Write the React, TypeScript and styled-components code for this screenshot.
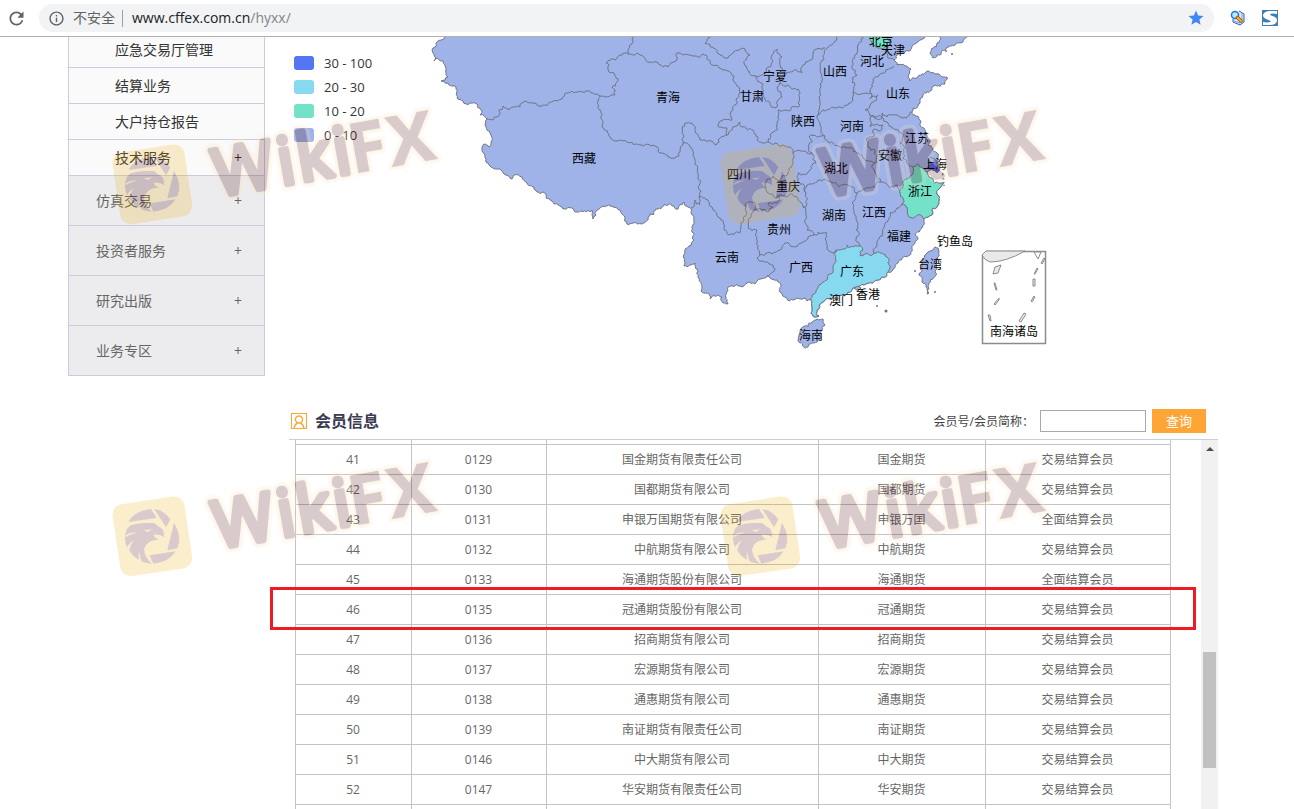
import React from "react";
import styled, { createGlobalStyle } from "styled-components";
import { MdRefresh, MdInfoOutline, MdStar } from "react-icons/md";

const GlobalStyle = createGlobalStyle`
  * { box-sizing: border-box; }
  body {
    margin: 0;
    background: #fff;
    font-family: "Open Sans", "Noto Sans CJK SC", sans-serif;
    font-size: 12px;
    color: #666;
  }
`;

const Page = styled.div`
  position: relative;
  display: flex;
  flex-direction: column;
  height: 100vh;
  overflow: hidden;
`;

/* Browser bar */

const BrowserBar = styled.header`
  position: relative;
  z-index: 1;
  display: flex;
  align-items: center;
  flex: none;
  gap: 16px;
  height: 37px;
  padding: 0 16px 0 6px;
  background: #fff;
  border-bottom: 1px solid #b0b0b0;
`;

const ReloadButton = styled.button`
  display: flex;
  margin-right: -4px;
  padding: 0;
  border: 0;
  background: none;
  color: #5f6368;
`;

const AddressBar = styled.div`
  display: flex;
  align-items: center;
  flex: 1;
  height: 28px;
  padding: 0 9px;
  border-radius: 14px;
  background: #f1f3f4;
  color: #5f6368;
  font-size: 14px;
  line-height: 20px;
`;

const Security = styled.span`
  display: flex;
  align-items: center;
  gap: 8px;
  margin-right: 9px;
  padding-right: 7px;
  border-right: 1px solid #9aa0a6;
  line-height: 16px;
`;

const Host = styled.span`
  color: #202124;
`;

const Path = styled.span`
  flex: 1;
  color: #80868b;
`;

const StarButton = styled.button`
  display: flex;
  padding: 0;
  border: 0;
  background: none;
  color: #4285f4;
`;

/* Page body */

const Body = styled.div`
  display: flex;
  flex: 1;
  gap: 24px;
  min-height: 0;
  padding: 0 76px 0 68px;
`;

const SideNav = styled.nav`
  flex: none;
  align-self: flex-start;
  width: 197px;
  margin-top: -5px;
  border: solid #cacbdc;
  border-width: 0 1px;
`;

const NavItem = styled.a<{ $sub?: boolean }>`
  display: flex;
  align-items: center;
  justify-content: space-between;
  height: ${(p) => (p.$sub ? 36 : 50)}px;
  padding: 0 22px 0 ${(p) => (p.$sub ? 46 : 27)}px;
  border-bottom: 1px solid #cacbdc;
  background: ${(p) => (p.$sub ? "#fafafa" : "#ececee")};
  color: ${(p) => (p.$sub ? "#333" : "#666")};
  font-size: 14px;
  line-height: 20px;
  text-decoration: none;
`;

const Content = styled.main`
  display: flex;
  flex-direction: column;
  flex: 1;
  min-width: 0;
`;

const MapPanel = styled.section`
  display: flex;
  flex: none;
  height: 365px;
`;

const Legend = styled.ul`
  flex: none;
  width: 141px;
  margin: 0;
  padding: 14px 0 0 5px;
  list-style: none;
`;

const LegendItem = styled.li`
  display: flex;
  align-items: center;
  gap: 10px;
  height: 24px;
  color: #333;
  font-size: 13px;
`;

const Swatch = styled.span<{ $color: string }>`
  width: 20px;
  height: 14px;
  border-radius: 3px;
  background: ${(p) => p.$color};
`;

const MapSvg = styled.svg`
  flex: none;
  font-size: 12px;
`;

const SectionHead = styled.div`
  display: flex;
  align-items: center;
  flex: none;
  height: 38px;
  padding: 0 12px 0 2px;
  border-bottom: 1px solid #cbcddd;
`;

const SectionTitle = styled.h2`
  flex: 1;
  margin: 0 0 0 8px;
  color: #3b3b52;
  font-size: 16px;
  line-height: 24px;
`;

const SearchForm = styled.form`
  display: flex;
  align-items: center;
  gap: 6px;
`;

const SearchLabel = styled.label`
  color: #444;
`;

const SearchInput = styled.input`
  width: 106px;
  height: 22px;
  padding: 0 4px;
  border: 1px solid #a9a9a9;
  background: #fff;
  font: inherit;
`;

const SearchButton = styled.button`
  width: 54px;
  height: 24px;
  padding: 0;
  border: 0;
  background: #ffa536;
  color: #fff;
  font: inherit;
  font-size: 13px;
`;

const ListPanel = styled.div`
  display: flex;
  flex: 1;
  gap: 30px;
  min-height: 0;
  padding-left: 6px;
  overflow: hidden;
`;

const TableArea = styled.div`
  flex: 1;
  min-width: 0;
`;

const MemberTable = styled.table`
  width: 100%;
  table-layout: fixed;
  border-spacing: 0;
  border-left: 1px solid #c3c3c3;
`;

const Row = styled.tr<{ $height?: number }>`
  height: ${(p) => p.$height ?? 30}px;
`;

const Cell = styled.td`
  padding: 0 1px 0 0;
  border: solid #c3c3c3;
  border-width: 0 1px 1px 0;
  text-align: center;
  line-height: 18px;
`;

const ScrollTrack = styled.div`
  display: flex;
  flex-direction: column;
  align-items: center;
  flex: none;
  width: 17px;
  padding-top: 7px;
  background: #f1f1f1;
`;

const ScrollThumb = styled.div`
  width: 13px;
  height: 116px;
  margin-top: 201px;
  background: #c1c1c1;
`;

/* Layers above the page */

const HighlightBox = styled.div`
  position: absolute;
  top: 587px;
  left: 270px;
  right: 98px;
  height: 43px;
  border: 3px solid #ed1c24;
`;

const WatermarkLayer = styled.div`
  position: absolute;
  inset: 0;
  overflow: hidden;
  pointer-events: none;
`;

const WatermarkMark = styled.svg<{ $left: number; $top: number }>`
  position: absolute;
  left: ${(p) => p.$left}px;
  top: ${(p) => p.$top}px;
  opacity: 0.2;
`;

/* Map geometry */

type Point = [number, number];

const parse = (s: string): Point[] =>
  s.trim().split(/\s+/).map((p) => p.split(",").map(Number) as Point);

const noise = (x: number, y: number) => {
  const v = Math.sin(x * 12.9898 + y * 78.233) * 43758.5453;
  return v - Math.floor(v) - 0.5;
};

/* Adds small bends to a segment; the same segment gives the same bends in either direction. */
const bend = (a: Point, b: Point): Point[] => {
  const len = Math.hypot(b[0] - a[0], b[1] - a[1]);
  if (len < 2.5) return [];
  const forward = a[0] < b[0] || (a[0] === b[0] && a[1] < b[1]);
  const [p, q] = forward ? [a, b] : [b, a];
  const d = noise(p[0] + q[0], p[1] + q[1]) * Math.min(len * 0.6, 4);
  const m: Point = [
    (p[0] + q[0]) / 2 - ((q[1] - p[1]) / len) * d,
    (p[1] + q[1]) / 2 + ((q[0] - p[0]) / len) * d,
  ];
  return [...bend(a, m), m, ...bend(m, b)];
};

const rough = (s: string, closed = false) => {
  const pts = parse(s);
  const out: Point[] = [];
  pts.forEach((p, i) => {
    out.push(p);
    const next = pts[i + 1] ?? (closed ? pts[0] : undefined);
    if (next) out.push(...bend(p, next));
  });
  return (
    "M" + out.map((p) => `${p[0].toFixed(1)},${p[1].toFixed(1)}`).join("L") + (closed ? "Z" : "")
  );
};

const mainland =
  "445,37 437,42 435,47 432,50 434,55 434,61 443,61 445,65 446,73 448,77 445,80 441,81 448,83 456,88 457,98 463,101 470,103 478,105 480,115 487,119 486,127 490,133 491,142 489,147 484,144 482,147 485,155 487,163 491,167 497,169 504,174 511,179 514,175 522,177 527,183 535,190 537,192 543,192 546,198 552,201 554,204 562,207 564,209 572,208 577,212 587,211 592,210 593,219 596,215 597,210 603,206 613,207 620,210 622,214 625,217 627,224 633,223 642,224 648,217 658,209 668,205 678,209 684,202 688,207 691,213 694,218 694,240 685,253 684,266 695,263 698,277 702,287 701,291 707,293 710,299 722,297 723,303 728,304 726,293 728,287 740,286 747,283 755,284 760,279 767,276 770,278 778,282 780,292 787,298 800,299 807,301 811,300 812,307 811,313 815,317 819,316 817,310 819,305 827,298 833,297 842,295 848,292 853,288 860,286 868,283 877,280 883,277 888,272 892,271 898,263 908,256 912,248 917,240 915,235 922,228 924,219 932,215 933,208 938,205 938,195 941,187 944,182 941,183 935,183 931,178 927,172 933,170 939,171 938,165 938,158 937,153 928,145 927,133 920,120 912,112 913,108 920,103 923,95 932,90 935,85 945,84 947,77 942,77 935,74 927,71 922,74 917,78 910,81 908,77 911,69 905,66 897,65 894,60 897,55 903,53 910,51 913,45 918,42 920,40 925,37 925,20 445,20";

const bluePatches = [
  "940,37 937,43 930,53 933,58 937,55 945,50 955,45 963,42 967,37 967,20 940,20",
  "823,319 812,322 803,327 799,335 800,343 808,347 817,342 820,333 825,325",
  "935,247 928,252 922,263 919,275 922,282 926,287 927,294 929,293 929,283 935,272 937,258 939,252 938,248",
];

const borders = [
  "487,119 497,117 503,106 520,107 525,101 532,103 540,106 553,101 562,99 567,93 587,91 593,93 600,96",
  "600,96 615,95 615,90 612,87 617,82 611,73 609,65 606,63 628,54 634,37",
  "628,54 637,53 650,62 668,67 677,59 677,53 690,55 703,54 710,63 723,70 731,73 734,82 740,93 737,103 731,112 732,120 720,121 718,125 727,128 727,135",
  "727,135 720,138 716,145 703,140 695,132 692,123 685,123 682,128 684,137 683,143",
  "683,143 680,150 679,156 668,157 660,153 655,146 640,145 627,142 610,137 602,127 601,117 598,107 600,96",
  "683,143 690,147 694,157 695,163 698,173 699,197 700,205 695,200 691,208",
  "699,197 703,198 712,207 718,217 727,233 739,233 741,223 747,213 747,202 754,202 755,210",
  "755,210 748,220 748,228 757,230 757,240 760,255 757,258 763,261 773,265 773,272 767,276",
  "760,255 772,254 780,250 785,243 795,247 803,242 808,237 817,235",
  "755,210 760,209 767,212 773,207 768,203 777,203 780,195 793,195 798,200 803,207 805,220 808,227 807,230 814,235",
  "817,235 818,232 827,233 827,247 833,253 836,250",
  "857,193 852,203 854,213 856,230 857,242 860,246",
  "875,253 877,245 883,232 887,222 890,213 898,208 902,205",
  "900,193 897,185 890,188 882,182 875,185 875,188 857,193",
  "913,167 908,164 903,158 905,147 900,143 903,137 898,130 892,128 888,123 882,117",
  "882,117 875,117 870,118 870,127 875,125 883,125 882,129 873,130 872,137 867,138 868,147 875,150 877,162",
  "877,162 872,165 875,173 881,182",
  "877,162 863,158 857,153 852,148 840,147 828,142 825,136",
  "882,117 882,113 887,117 897,115 903,118 912,112",
  "882,117 870,116 865,110 873,102 878,95 870,99 872,95",
  "872,95 870,90 873,83 883,73 892,68 894,66",
  "872,95 867,93 853,92",
  "853,92 855,85 852,78 857,75 852,68 852,62 857,53 858,45 863,37",
  "853,92 853,100 848,105 837,108 817,116",
  "817,116 819,97 822,80 820,67 823,57 827,48 837,37",
  "817,116 820,125 825,136 809,137 812,142 809,148 813,155 816,163 808,172 798,173 798,180 805,187 806,193",
  "813,155 807,153 798,150 793,153 790,147",
  "806,193 807,185 820,180 833,183 843,185 853,187 857,193",
  "806,193 807,205 803,207",
  "790,147 783,145 775,143 768,142 757,140 753,130 743,127 740,122 733,127 727,135",
  "768,142 772,133 777,130 777,122 778,110 790,111 800,105 800,92 790,87 780,83",
  "755,76 763,85 765,100 777,107 778,100 782,97 777,88 780,83 787,73 780,67 782,57 777,49 772,55 770,67 765,73 755,76",
  "755,76 748,70 744,63 750,55 745,49 733,53 728,58 720,55 705,43 711,37",
  "787,73 792,72 802,73 803,65 813,53 825,48",
  "793,153 793,163 788,173 777,180 773,176 765,183 768,193 777,198 780,195",
  "888,47 886,53 888,58 894,60",
];

const guangdong =
  "836,250 845,249 847,245 860,246 863,250 860,256 872,255 877,252 887,257 888,272 883,277 877,280 868,283 860,286 853,288 848,292 842,295 833,297 827,298 819,305 817,310 819,316 815,317 811,313 812,307 811,300 812,295 818,288 827,280 833,268";
const zhejiang =
  "900,193 903,182 912,175 913,167 917,164 922,168 927,172 931,178 935,183 941,183 944,182 941,187 938,195 938,205 933,208 932,215 924,219 922,216 915,217 908,215 907,207 902,205 903,198";
const beijing = "870,37 873,45 880,48 888,47 892,42 888,37 888,30 870,30";
const shanghai = "927,168 930,164 934,160 938,165 939,171 933,170";

const labels: [string, number, number][] = [
  ["青海", 668, 97], ["西藏", 584, 158], ["宁夏", 775, 76], ["甘肃", 752, 96],
  ["陕西", 803, 121], ["山西", 835, 71], ["河北", 872, 61], ["北京", 881, 41],
  ["天津", 893, 50], ["山东", 898, 93], ["河南", 852, 126], ["江苏", 917, 138],
  ["安徽", 890, 155], ["上海", 935, 164], ["湖北", 836, 168], ["四川", 739, 174],
  ["重庆", 788, 186], ["浙江", 920, 191], ["湖南", 834, 215], ["江西", 874, 212],
  ["福建", 899, 236], ["贵州", 779, 229], ["云南", 727, 257], ["广西", 801, 267],
  ["广东", 852, 271], ["澳门", 841, 300], ["香港", 868, 294], ["海南", 811, 335],
  ["台湾", 930, 264], ["钓鱼岛", 955, 241], ["南海诸岛", 1014, 331],
];

const ChinaMap = () => (
  <MapSvg width="640" height="353" viewBox="430 37 640 353" role="img" aria-label="会员分布图">
    <g stroke="#6f7482" strokeWidth="1" strokeLinejoin="round" fill="#9fb3e9">
      <path d={rough(mainland, true)} />
      {bluePatches.map((p) => (
        <path key={p} d={rough(p, true)} />
      ))}
      {borders.map((p) => (
        <path key={p} d={rough(p)} fill="none" />
      ))}
      <path d={rough(guangdong, true)} fill="#86d9ee" />
      <path d={rough(zhejiang, true)} fill="#73e2c8" />
      <path d={rough(beijing, true)} fill="#73e2c8" />
      <path d={rough(shanghai, true)} fill="#4a68ee" />
      <path d="M930,157l6,3M854,288l4,-2l3,2l-3,3z" />
    </g>
    <g fill="#6f7482">
      <circle cx="946" cy="51" r="1" />
      <circle cx="952" cy="54" r="1" />
      <circle cx="915" cy="271" r="1" />
      <circle cx="935" cy="292" r="1" />
      <circle cx="886" cy="311" r="1.5" />
      <circle cx="877" cy="306" r="1" />
      <path d="M942,173l2,1l-2,2zM943,178l2,1l-3,1zM944,184l1,2l-2,0z" />
    </g>
    <g stroke="#8c8c8c" fill="none">
      <path d="M986.500,251.500H1045.500V343.500H982.500V255.500Z" strokeWidth="1.500" />
      <g fill="#e9e9e9" strokeWidth="1">
        <path d="M986,251H1025Q1006,262 990,262Q984,260 982,255Z" />
        <path d="M1034,252L1038,259L1041,252Z" fill="#fff" />
        <path d="M995,267L1001,265L998,273L993,274Z" />
        <path d="M994,283L996,290L997,290L995,283Z" />
        <path d="M994,304L999,298L999,300L995,305Z" />
        <path d="M988,315L990,321L991,321L990,315Z" />
        <path d="M1041,263L1044,258L1045,259L1042,264Z" />
        <path d="M1034,274L1037,268L1038,269L1035,274Z" />
        <path d="M1033,279H1035V286H1033Z" />
        <path d="M1031,301L1034,296L1035,297L1032,302Z" />
        <path d="M1019,321L1024,313L1026,314L1021,322Z" />
      </g>
    </g>
    <g fill="#000" textAnchor="middle">
      {labels.map(([name, x, y]) => (
        <text key={name} x={x} y={y + 5}>
          {name}
        </text>
      ))}
    </g>
  </MapSvg>
);

/* Rounded "Wiki" and square-cut "FX", each with its own stroke weight. */
const Wordmark = ({ color, grow }: { color: string; grow: number }) => (
  <g fill={color} stroke={color} strokeLinejoin="round">
    <text x="384 579 638 749" y="332" fontWeight="400" fontSize="196" strokeWidth={17 + grow}>
      Wiki
    </text>
    <text x="796 917" y="335" fontWeight="700" fontSize="206" strokeWidth={3 + grow}>
      FX
    </text>
  </g>
);

const Watermark = ({ left, top }: { left: number; top: number }) => (
  <WatermarkMark $left={left} $top={top} width="370" height="150" viewBox="0 0 1110 450" aria-hidden>
    <rect x="78" y="180" width="218" height="218" rx="32" fill="#eeae08" transform="rotate(-8.500 187 289)" />
    <g fill="#44000c">
      <path d="M115,246Q133,212 183,207L200,234Z" />
      <path d="M193,207Q225,212 241,238L228,262Z" />
      <path d="M252,248Q278,290 262,325L232,331Z" />
      <path d="M179,346L257,334Q236,368 190,371Z" />
      <path d="M105,300Q104,268 122,256Q160,244 194,250Q205,262 214,264Q223,272 222,291Q208,282 190,284Q198,298 208,299Q170,298 162,328Q164,355 186,371Q166,370 155,364Q150,350 147,335Q144,350 148,360Q126,348 118,330Q122,312 132,300Q114,312 112,322Q106,312 105,300Z" />
    </g>
    <path d="M161,269Q172,271 184,267Q180,277 170,275ZM108,285Q122,276 140,278Q120,282 107,292Z" fill="#eeae08" />
    <g transform="rotate(-10 345 338)" fontFamily="Open Sans">
      <Wordmark color="#fdeac8" grow={22} />
      <Wordmark color="#fad9a0" grow={12} />
      <Wordmark color="#440006" grow={0} />
    </g>
  </WatermarkMark>
);

const subItems: [string, boolean][] = [
  ["应急交易厅管理", false],
  ["结算业务", false],
  ["大户持仓报告", false],
  ["技术服务", true],
];
const navItems = ["仿真交易", "投资者服务", "研究出版", "业务专区"];

const legend: [string, string][] = [
  ["#5476f3", "30 - 100"],
  ["#86d9ee", "20 - 30"],
  ["#73e2c8", "10 - 20"],
  ["#9fb3e9", "0 - 10"],
];

const members = [
  ["41", "0129", "国金期货有限责任公司", "国金期货", "交易结算会员"],
  ["42", "0130", "国都期货有限公司", "国都期货", "交易结算会员"],
  ["43", "0131", "申银万国期货有限公司", "申银万国", "全面结算会员"],
  ["44", "0132", "中航期货有限公司", "中航期货", "交易结算会员"],
  ["45", "0133", "海通期货股份有限公司", "海通期货", "全面结算会员"],
  ["46", "0135", "冠通期货股份有限公司", "冠通期货", "交易结算会员"],
  ["47", "0136", "招商期货有限公司", "招商期货", "交易结算会员"],
  ["48", "0137", "宏源期货有限公司", "宏源期货", "交易结算会员"],
  ["49", "0138", "通惠期货有限公司", "通惠期货", "交易结算会员"],
  ["50", "0139", "南证期货有限责任公司", "南证期货", "交易结算会员"],
  ["51", "0146", "中大期货有限公司", "中大期货", "交易结算会员"],
  ["52", "0147", "华安期货有限责任公司", "华安期货", "交易结算会员"],
];

const blankCells = [0, 1, 2, 3, 4].map((i) => <Cell key={i} />);

export default function App() {
  return (
    <Page>
      <GlobalStyle />
      <BrowserBar>
        <ReloadButton type="button" aria-label="重新加载">
          <MdRefresh size={21} />
        </ReloadButton>
        <AddressBar>
          <Security>
            <MdInfoOutline size={17} />
            不安全
          </Security>
          <Host>www.cffex.com.cn</Host>
          <Path>/hyxx/</Path>
          <StarButton type="button" aria-label="收藏">
            <MdStar size={18} />
          </StarButton>
        </AddressBar>
        <svg width="16" height="16" viewBox="0 0 16 16" aria-hidden>
          <path d="M9,1L14,4V12L10,15L3,12V9" fill="#dce8fa" stroke="#2d5fb4" />
          <path d="M12,4V11L9,13M4,11L10,13" fill="none" stroke="#7ba4e0" />
          <circle cx="5" cy="5" r="3.500" fill="#b5ecff" stroke="#2a6fe0" strokeWidth="1.500" />
          <path d="M7.500,7.500L11,11" stroke="#8a4a00" strokeWidth="3.500" strokeLinecap="round" />
          <path d="M7.500,7.500L11,11" stroke="#ffb21a" strokeWidth="2" strokeLinecap="round" />
        </svg>
        <svg width="16" height="16" viewBox="0 0 16 16" aria-hidden>
          <rect width="16" height="16" fill="#3d80b1" />
          <path
            d="M15,1V4Q11,3 8,4Q8,5.500 12,6.500Q15.500,8 15,11Q14,15 8,15H1V12Q6,13 9,11.500Q8,10 4,9Q0.500,7.500 1,5Q2,1.500 7,1Z"
            fill="#fff"
          />
        </svg>
      </BrowserBar>

      <Body>
        <SideNav aria-label="业务导航">
          {subItems.map(([name, more]) => (
            <NavItem key={name} href="#" $sub>
              {name}
              {more && <span>+</span>}
            </NavItem>
          ))}
          {navItems.map((name) => (
            <NavItem key={name} href="#">
              {name}
              <span>+</span>
            </NavItem>
          ))}
        </SideNav>

        <Content>
          <MapPanel>
            <Legend>
              {legend.map(([color, text]) => (
                <LegendItem key={text}>
                  <Swatch $color={color} />
                  {text}
                </LegendItem>
              ))}
            </Legend>
            <ChinaMap />
          </MapPanel>

          <SectionHead>
            <svg width="16" height="16" viewBox="0 0 16 16" fill="none" stroke="#ffa536" aria-hidden>
              <rect x="0.500" y="0.500" width="15" height="15" />
              <circle cx="8" cy="6.500" r="3.500" strokeWidth="1.400" />
              <path d="M3,15Q4,11 6.500,10M13,15Q12,11 9.500,10" strokeWidth="1.400" />
            </svg>
            <SectionTitle>会员信息</SectionTitle>
            <SearchForm onSubmit={(e) => e.preventDefault()}>
              <SearchLabel htmlFor="member">会员号/会员简称：</SearchLabel>
              <SearchInput id="member" type="text" />
              <SearchButton type="submit">查询</SearchButton>
            </SearchForm>
          </SectionHead>

          <ListPanel>
            <TableArea>
              <MemberTable aria-label="会员信息">
                <colgroup>
                  <col width="116" />
                  <col width="135" />
                  <col width="272" />
                  <col width="167" />
                  <col />
                </colgroup>
                <tbody>
                  <Row $height={5}>{blankCells}</Row>
                  {members.map((m) => (
                    <Row key={m[0]}>
                      {m.map((text, i) => (
                        <Cell key={i}>{text}</Cell>
                      ))}
                    </Row>
                  ))}
                  <Row>{blankCells}</Row>
                </tbody>
              </MemberTable>
            </TableArea>
            <ScrollTrack>
              <svg width="8" height="4" viewBox="0 0 8 4" aria-hidden>
                <path d="M0,4L4,0L8,4Z" fill="#505050" />
              </svg>
              <ScrollThumb />
            </ScrollTrack>
          </ListPanel>
        </Content>
      </Body>

      <WatermarkLayer>
        {[88, 440, 792].map((top) =>
          [90, 698].map((left) => <Watermark key={`${left}-${top}`} left={left} top={top} />)
        )}
      </WatermarkLayer>
      <HighlightBox />
    </Page>
  );
}
